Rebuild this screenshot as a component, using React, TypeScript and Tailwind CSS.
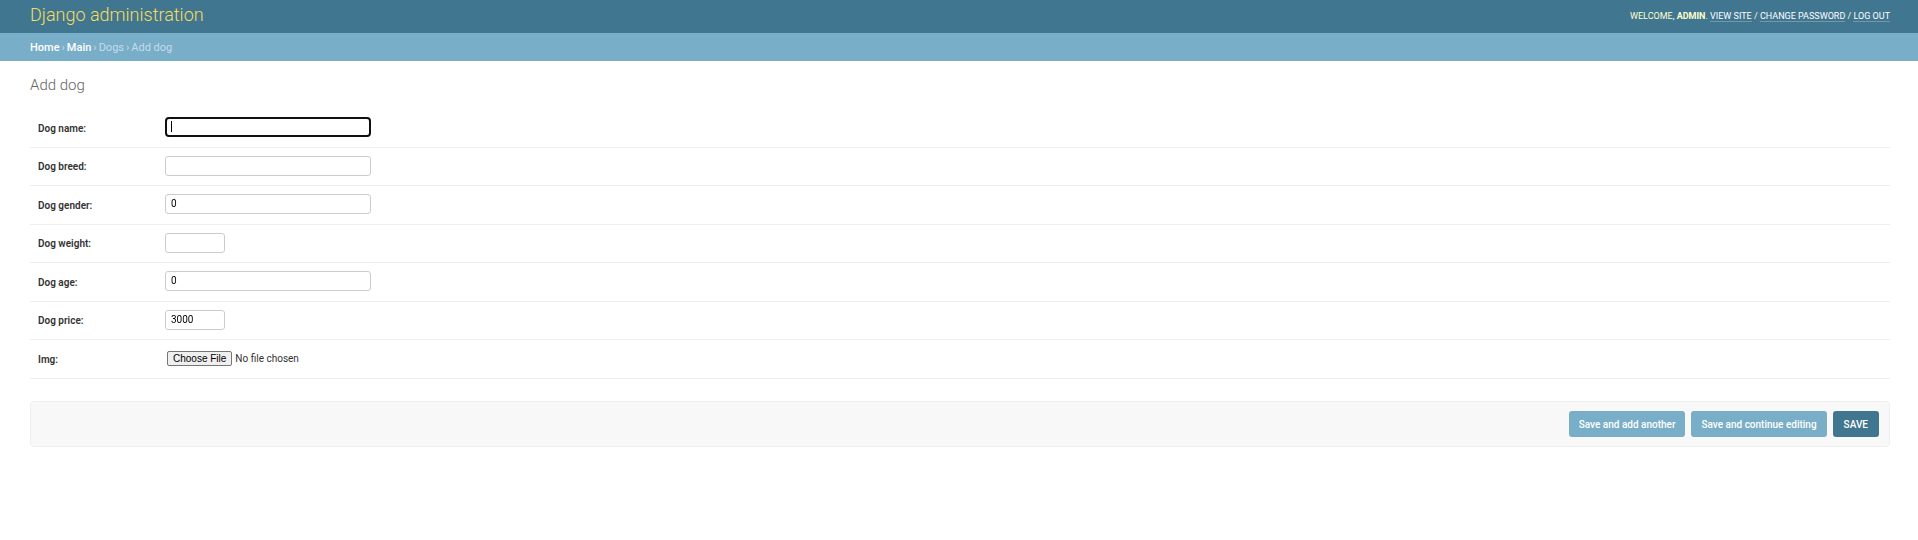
type Field = {
  id: string;
  label: string;
  type: "text" | "number" | "file";
  value?: string;
  autoFocus?: boolean;
};

const fields: Field[] = [
  { id: "dog_name", label: "Dog name:", type: "text", value: "", autoFocus: true },
  { id: "dog_breed", label: "Dog breed:", type: "text", value: "" },
  { id: "dog_gender", label: "Dog gender:", type: "text", value: "0" },
  { id: "dog_weight", label: "Dog weight:", type: "number", value: "" },
  { id: "dog_age", label: "Dog age:", type: "text", value: "0" },
  { id: "dog_price", label: "Dog price:", type: "number", value: "3000" },
  { id: "img", label: "Img:", type: "file" },
];

const inputBase =
  "peer block h-5 rounded-[3px] border border-[#ccc] bg-white px-[5px] pb-px text-[10px] leading-3 text-black caret-transparent focus:rounded focus:border-2 focus:border-[#101010] focus:px-1 focus:outline-none";

function FieldInput({ field }: { field: Field }) {
  if (field.type === "file") {
    return (
      <input
        id={field.id}
        name={field.id}
        type="file"
        className="ml-[2px] h-[15px] w-48 text-[10px] leading-[13px] text-[#333] file:mr-[3px] file:h-[15px] file:rounded-[2px] file:border file:border-solid file:border-[#767676] file:bg-[#efefef] file:px-[5px] file:font-['Liberation_Sans',Arial,sans-serif] file:text-[10px] file:leading-[13px] file:text-black"
      />
    );
  }
  return (
    <div className="relative">
      <input
        id={field.id}
        name={field.id}
        type={field.type}
        defaultValue={field.value}
        placeholder=" "
        autoFocus={field.autoFocus}
        className={field.type === "number" ? `${inputBase} w-[60px]` : `${inputBase} w-[206px]`}
      />
      <span
        aria-hidden="true"
        className="pointer-events-none absolute top-1 left-[6px] hidden h-[11px] w-px bg-black peer-placeholder-shown:peer-focus:block"
      />
    </div>
  );
}

function HeaderLink({ children }: { children: string }) {
  return (
    <a href="#" className="border-b border-white/25 text-white">
      {children}
    </a>
  );
}

export default function App() {
  return (
    <div className="font-[Roboto,'Liberation_Sans',sans-serif] text-[#333]">
      <header className="flex h-[33px] items-center justify-between bg-[#417690] pr-7 pl-[30px] text-[#ffc]">
        <a href="#" className="pb-1 text-lg leading-6 font-light text-[#f5dd5d]">
          Django administration
        </a>
        <div className="pb-[2px] text-[9px] leading-[10px] uppercase">
          Welcome, <strong className="font-bold">admin</strong>. <HeaderLink>View site</HeaderLink> /{" "}
          <HeaderLink>Change password</HeaderLink> / <HeaderLink>Log out</HeaderLink>
        </div>
      </header>

      <nav
        aria-label="Breadcrumbs"
        className="flex h-7 items-center gap-[2px] bg-[#79aec8] pt-px pr-7 pl-[30px] text-[11px] leading-4 text-[#c4dce8]"
      >
        <a href="#" className="font-medium text-white">Home</a>
        <span>›</span>
        <a href="#" className="font-medium text-white">Main</a>
        <span>›</span>
        <span>Dogs</span>
        <span>›</span>
        <span>Add dog</span>
      </nav>

      <main className="pt-[15px] pr-7 pl-[30px]">
        <h1 className="text-[15px] leading-[18px] font-light text-[#666]">Add dog</h1>

        <form className="mt-[15px]" onSubmit={(e) => e.preventDefault()}>
          {fields.map((field) => (
            <div
              key={field.id}
              className="flex h-[38px] items-center border-b border-[#eee] pb-[2px] pl-2 odd:h-[39px]"
            >
              <label htmlFor={field.id} className="w-[127px] pt-[3px] text-[10px] leading-3 font-semibold">
                {field.label}
              </label>
              <FieldInput field={field} />
            </div>
          ))}

          <div className="mt-[22px] flex justify-end gap-[6px] rounded border border-[#eee] bg-[#f8f8f8] px-[10px] py-[9px] text-[10px] leading-3 font-medium text-white">
            <button type="submit" className="rounded-[3px] bg-[#79aec8] px-[10px] pt-2 pb-[6px]">
              Save and add another
            </button>
            <button type="submit" className="rounded-[3px] bg-[#79aec8] px-[10px] pt-2 pb-[6px]">
              Save and continue editing
            </button>
            <button type="submit" className="rounded-[3px] bg-[#417690] px-[11px] pt-2 pb-[6px] uppercase">
              Save
            </button>
          </div>
        </form>
      </main>
    </div>
  );
}
